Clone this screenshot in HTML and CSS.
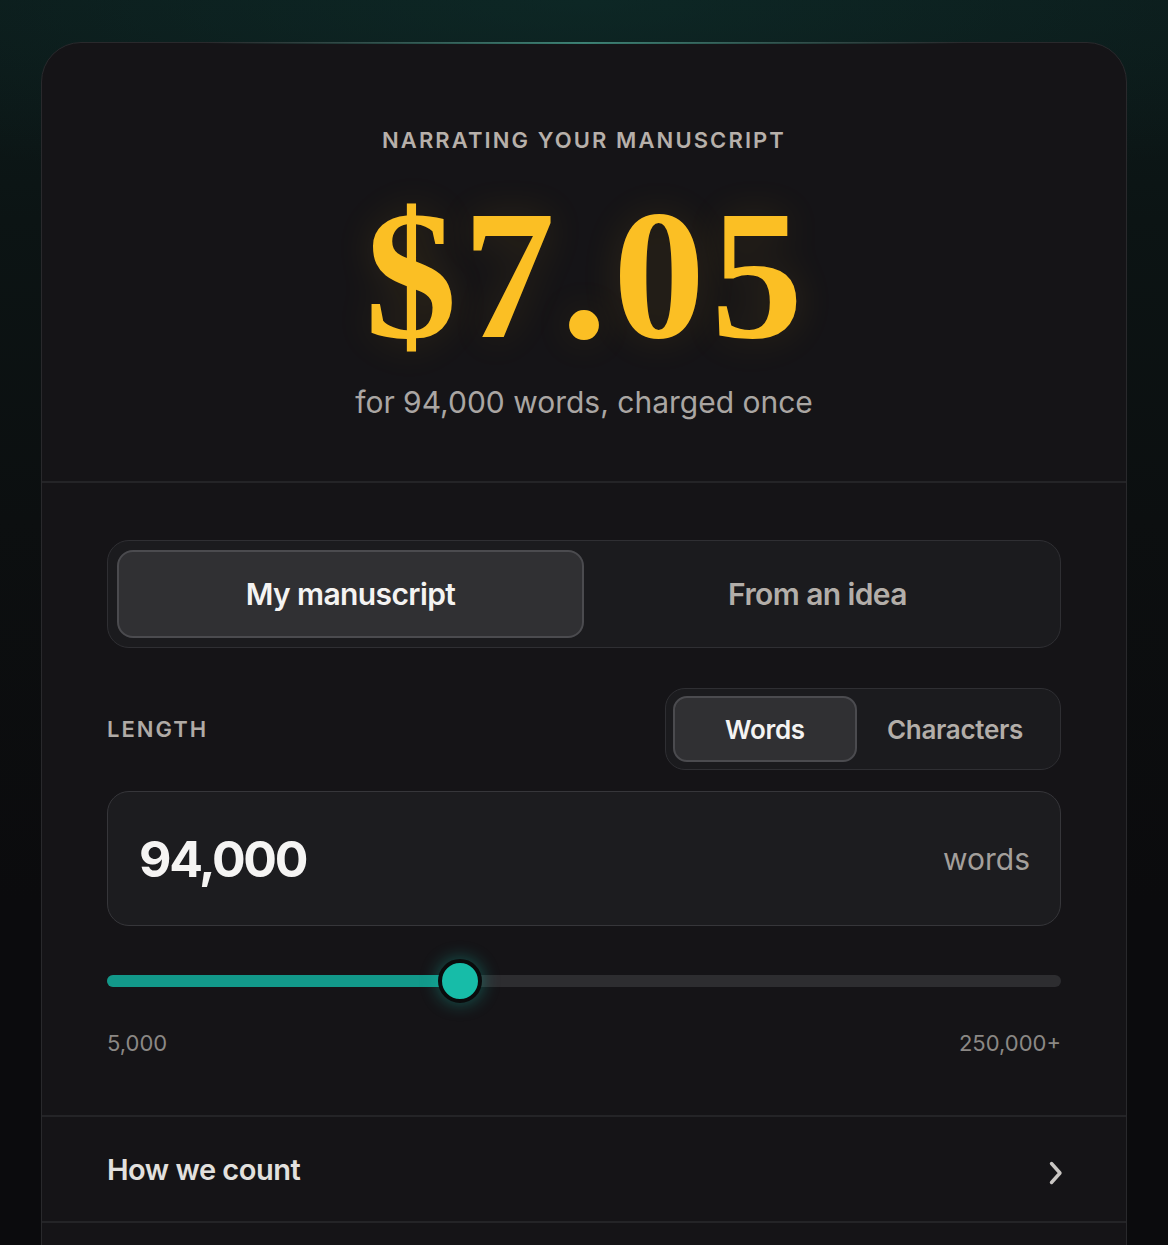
FILE: index.html
```html
<!DOCTYPE html>
<html lang="en">
<head>
    <meta charset="UTF-8">
    <meta name="viewport" content="width=device-width, initial-scale=1.0">
    <title>Narration price</title>
    <link rel="stylesheet" href="styles.css">
</head>
<body>
    <div class="page">
        <div class="card">
            <div class="quote">
                <p class="eyebrow">NARRATING YOUR MANUSCRIPT</p>
                <div class="price">$7.05</div>
                <p class="price-note">for 94,000 words, charged once</p>
            </div>

            <div class="calc">
                <div class="tabs">
                    <button class="tab active">My manuscript</button>
                    <button class="tab">From an idea</button>
                </div>

                <div class="length-row">
                    <span class="label">LENGTH</span>
                    <div class="units">
                        <button class="unit active">Words</button>
                        <button class="unit">Characters</button>
                    </div>
                </div>

                <div class="amount">
                    <span class="amount-value">94,000</span>
                    <span class="amount-unit">words</span>
                </div>

                <div class="slider">
                    <div class="track">
                        <div class="fill" style="width: 37%"></div>
                        <div class="thumb" style="left: 37%"></div>
                    </div>
                </div>
                <div class="range">
                    <span>5,000</span>
                    <span>250,000+</span>
                </div>
            </div>

            <div class="row-link">
                <span>How we count</span>
                <svg class="chevron" width="16" height="24" viewBox="0 0 16 24" fill="none">
                    <path d="M3.5 2.5 L12 12 L3.5 21.5" stroke="#c9c6c3" stroke-width="3.4" stroke-linecap="round" stroke-linejoin="round"/>
                </svg>
            </div>
            <div class="row-link empty"></div>
        </div>
    </div>
</body>
</html>
```

FILE: styles.css
```css
body, html {
    margin: 0;
    padding: 0;
    width: 100%;
    height: 100%;
    font-family: Inter, "Noto Sans", sans-serif;
    background: #0b0b0d;
    overflow: hidden;
}

.page {
    min-height: 100%;
    padding: 42px 41px 0;
    box-sizing: border-box;
    background:
        radial-gradient(ellipse 80% 200px at 50% 0, rgba(14, 52, 48, 0.5), rgba(14, 52, 48, 0) 100%),
        linear-gradient(180deg, #0c1a1a 0, #0c1414 220px, #0c0f10 520px, #0b0b0d 900px);
}

.card {
    position: relative;
    background: #151417;
    border: 1px solid #29292c;
    border-radius: 40px 40px 0 0;
    min-height: 1300px;
}

/* тонкая подсветка по верхней кромке */
.card::before {
    content: "";
    position: absolute;
    top: -1px;
    left: 15%;
    right: 15%;
    height: 2px;
    background: linear-gradient(90deg, rgba(60, 160, 140, 0), rgba(72, 170, 150, 0.7) 50%, rgba(60, 160, 140, 0));
}

.quote {
    text-align: center;
    padding: 84px 0 61px;
    border-bottom: 2px solid #242427;
}

.eyebrow {
    margin: 0;
    font-size: 22px;
    font-weight: 600;
    letter-spacing: 2.1px;
    color: #b7b0aa;
}

.price {
    font-family: "Liberation Serif", "Times New Roman", serif;
    font-weight: bold;
    font-size: 184px;
    line-height: 1;
    letter-spacing: 6px;
    text-indent: 6px;
    color: #fbbf24;
    margin-top: 30px;
    text-shadow: 0 0 40px rgba(251, 191, 36, 0.12);
}

.price-note {
    margin: 17px 0 0;
    font-size: 30px;
    color: #aaa6a3;
}

.calc {
    padding: 57px 65px 59px;
    border-bottom: 2px solid #242427;
}

.tabs {
    display: flex;
    padding: 9px;
    background: #1b1b1e;
    border: 1px solid #2f2f33;
    border-radius: 22px;
}

button {
    font-family: inherit;
    cursor: pointer;
}

.tab {
    flex: 1;
    height: 88px;
    background: transparent;
    border: 2px solid transparent;
    border-radius: 16px;
    font-size: 30px;
    font-weight: 600;
    letter-spacing: -0.6px;
    color: #b3aea9;
}

.tab.active, .unit.active {
    background: #303033;
    border-color: #4b4b4f;
    color: #f4f3f2;
}

.length-row {
    display: flex;
    justify-content: space-between;
    align-items: center;
    margin-top: 40px;
}

.label {
    font-size: 22px;
    font-weight: 600;
    letter-spacing: 2px;
    color: #b0aba6;
}

.units {
    display: flex;
    padding: 7px;
    background: #1b1b1e;
    border: 1px solid #2f2f33;
    border-radius: 20px;
}

.unit {
    height: 66px;
    padding: 0 28px;
    background: transparent;
    border: 2px solid transparent;
    border-radius: 14px;
    font-size: 26px;
    font-weight: 600;
    letter-spacing: -0.3px;
    color: #b3aea9;
}

.unit.active {
    width: 184px;
}

.amount {
    display: flex;
    justify-content: space-between;
    align-items: center;
    height: 133px;
    margin-top: 21px;
    padding: 0 30px 0 31px;
    background: #1c1c1f;
    border: 1px solid #36363a;
    border-radius: 22px;
}

.amount-value {
    font-size: 50px;
    font-weight: 700;
    letter-spacing: -2.3px;
    color: #f5f4f3;
}

.amount-unit {
    font-size: 30px;
    color: #a39f9b;
}

.slider {
    padding: 49px 0 0;
}

.track {
    position: relative;
    height: 12px;
    border-radius: 6px;
    background: #2d2d30;
}

.fill {
    height: 100%;
    border-radius: 6px;
    background: #12998a;
}

.thumb {
    position: absolute;
    top: 50%;
    width: 36px;
    height: 36px;
    margin: -22px 0 0 -22px;
    border-radius: 50%;
    background: #17bca8;
    border: 4px solid #0a0b0c;
    box-shadow: 0 0 18px rgba(23, 188, 168, 0.45);
}

.range {
    display: flex;
    justify-content: space-between;
    margin-top: 43px;
    font-size: 22px;
    color: #8b8885;
}

.row-link {
    display: flex;
    justify-content: space-between;
    align-items: center;
    height: 104px;
    padding: 0 62px 0 65px;
    border-bottom: 2px solid #242427;
    font-size: 29px;
    font-weight: 600;
    letter-spacing: -0.5px;
    color: #e2e0de;
}

.chevron {
    margin-top: 8px;
}
```
